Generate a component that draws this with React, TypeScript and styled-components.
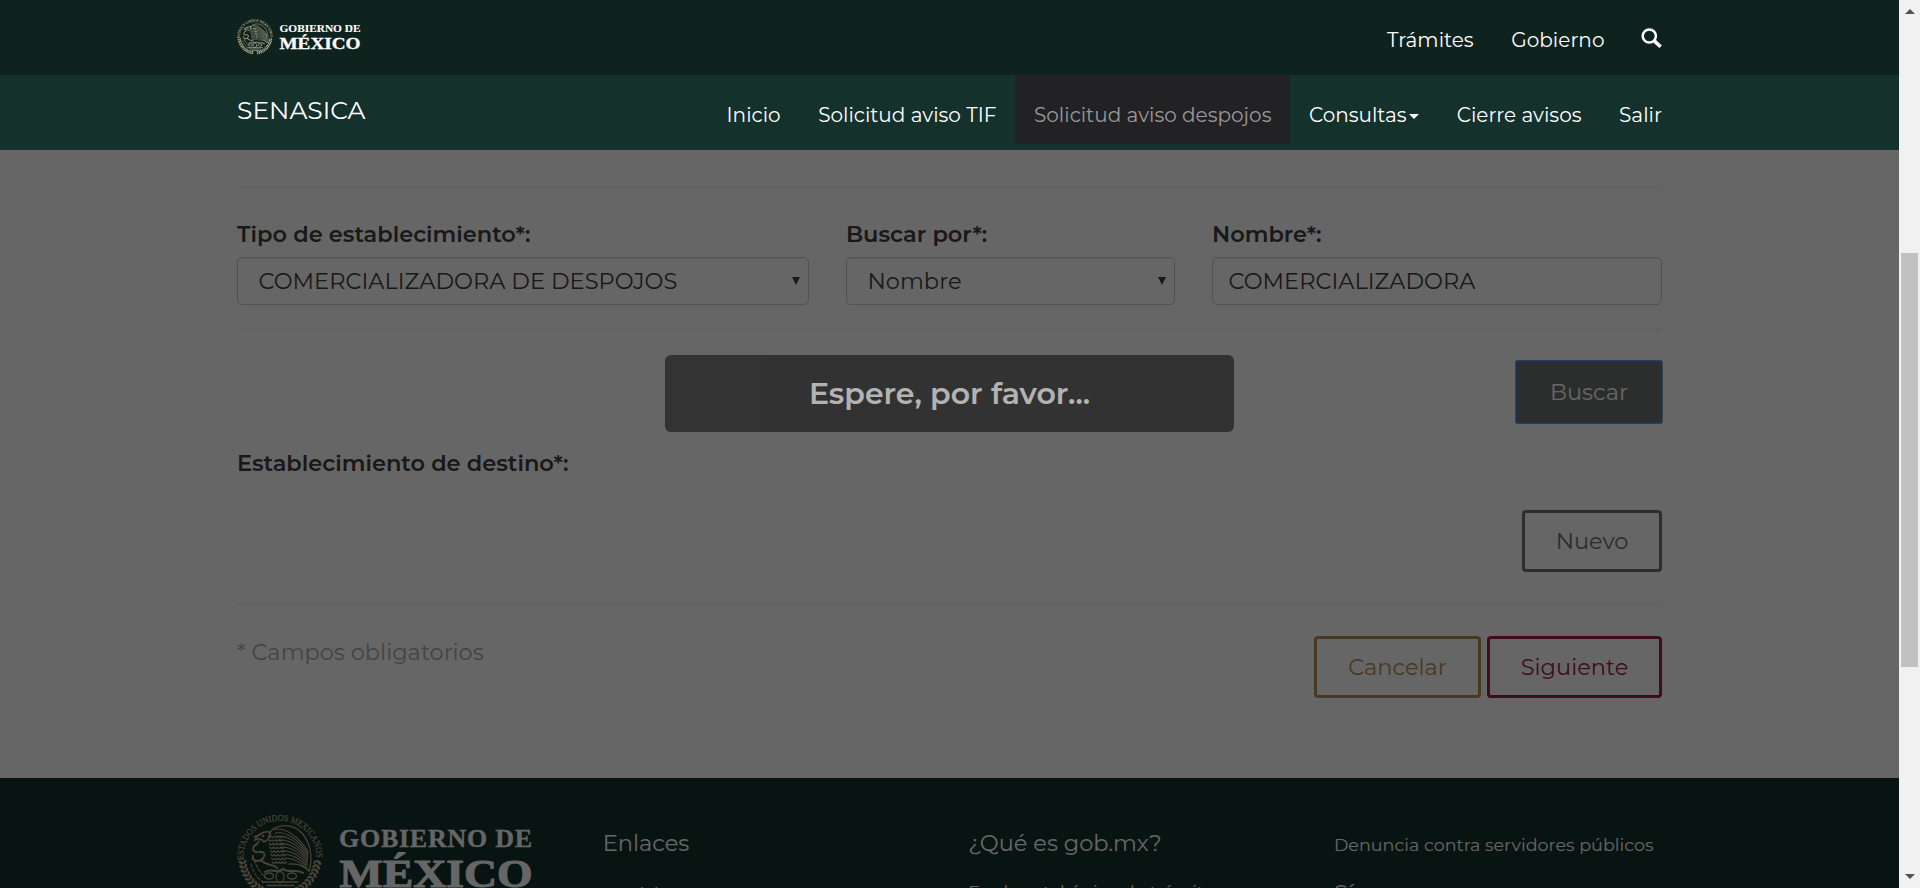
import React from 'react';
import styled, { createGlobalStyle, css } from 'styled-components';

const GlobalStyle = createGlobalStyle`
  *, *::before, *::after { box-sizing: border-box; }
  html, body { margin: 0; padding: 0; overflow: hidden; }
  body {
    font-family: Montserrat, Inter, "Liberation Sans", sans-serif;
    font-size: 22.5px;
    font-weight: 400;
    color: #404041;
    background: #fff;
  }
`;

const Screen = styled.div`
  display: grid;
  grid-template-columns: 1fr 21px;
  height: 888px;
  overflow: hidden;
`;

const Page = styled.div`
  position: relative;
  display: flex;
  flex-direction: column;
  height: 888px;
  overflow: hidden;
`;

const Container = styled.div`
  width: 1425px;
  margin: 0 auto;
`;

/* Header */

const Header = styled.header`
  position: relative;
  z-index: 2;
  flex: none;
`;

const Bar = styled.div<{ $tone: string }>`
  height: 75px;
  background: ${(p) => p.$tone};
`;

const BarInner = styled(Container)`
  display: flex;
  justify-content: space-between;
  align-items: flex-start;
  height: 75px;
`;

const HeaderBrand = styled.a`
  display: flex;
  padding-top: 19px;
`;

const TopLinks = styled.nav`
  display: flex;
  gap: 37.5px;
  padding-top: 28px;
`;

const TopLink = styled.a`
  font-size: 20px;
  line-height: 25px;
  font-weight: 400;
  letter-spacing: 0.05px;
  color: #fff;
`;

const SearchGlyph = styled.svg`
  display: block;
  width: 21px;
  height: 21px;
  margin: 0 0 0 -1px;
`;

const SiteName = styled.a`
  padding-top: 20px;
  font-size: 25px;
  line-height: 30px;
  font-weight: 400;
  color: #fff;
`;

const Menu = styled.nav`
  display: flex;
  margin-right: -18.75px;
`;

const MenuItem = styled.a<{ $active?: boolean }>`
  display: flex;
  align-items: center;
  height: 69px;
  padding: 11px 18.75px 0;
  font-size: 20px;
  line-height: 25px;
  font-weight: 400;
  letter-spacing: 0.026px;
  color: #fff;
  ${(p) =>
    p.$active &&
    css`
      color: #999;
      background: #222224;
    `}
`;

const Caret = styled.span`
  margin: 2px 0 0 2.5px;
  border-top: 5px solid currentColor;
  border-left: 5px solid transparent;
  border-right: 5px solid transparent;
`;

/* Form */

const Main = styled.main`
  flex: none;
  height: 628px;
  padding-top: 36px;
`;

const Rule = styled.hr`
  height: 1px;
  margin: 0;
  border: 0;
  background: #eee;
`;

const Fields = styled.div`
  display: grid;
  grid-template-columns: 572px 329px 450px;
  justify-content: space-between;
  padding: 31px 0 24px;
`;

const Field = styled.div`
  display: flex;
  flex-direction: column;
  gap: 7px;
`;

const Label = styled.label`
  line-height: 32px;
  font-weight: 600;
`;

const Control = styled.div<{ $select?: boolean }>`
  display: flex;
  align-items: center;
  justify-content: space-between;
  height: 48px;
  padding: 0 ${(p) => (p.$select ? '8px' : '15.5px')} 0 ${(p) => (p.$select ? '20.5px' : '15.5px')};
  border: 1px solid #ccc;
  border-radius: 5px;
  box-shadow: inset 0 1px 1px rgba(0, 0, 0, 0.075);
  letter-spacing: 0.03px;
  color: #404041;
`;

const SelectArrow = styled.span`
  border-top: 8px solid #404041;
  border-left: 4px solid transparent;
  border-right: 4px solid transparent;
`;

const Actions = styled.div`
  display: flex;
  justify-content: flex-end;
  gap: 6px;
`;

const SearchActions = styled(Actions)`
  padding: 31px 0 24px;
`;

const NewActions = styled(Actions)`
  padding: 31px 0;
`;

const FormFooter = styled.div`
  display: flex;
  justify-content: space-between;
  align-items: flex-start;
  padding-top: 32px;
`;

const Required = styled.p`
  margin: 0;
  line-height: 32px;
  color: #aaa;
`;

const Button = styled.button<{ $color: string; $filled?: boolean; $width: number }>`
  width: ${(p) => p.$width}px;
  height: 62px;
  padding: 0;
  border: 3px solid ${(p) => p.$color};
  border-radius: 4px;
  background: ${(p) => (p.$filled ? p.$color : 'transparent')};
  color: ${(p) => (p.$filled ? '#fff' : p.$color)};
  font: inherit;
  ${(p) =>
    p.$filled &&
    css`
      border: 1px solid #4d80cc;
      border-radius: 2px;
      box-shadow: 0 0 0 1px #6f9be0;
    `}
`;

/* Footer */

const Footer = styled.footer`
  flex: none;
  height: 400px;
  padding-top: 36px;
  background: #13322b;
`;

const FooterGrid = styled(Container)`
  display: grid;
  grid-template-columns: repeat(4, 1fr);
  column-gap: 37.5px;
`;

const FooterColumn = styled.div`
  padding-top: 15px;
  color: #fff;
`;

const FooterTitle = styled.h5<{ $gap?: number }>`
  margin: 0 0 ${(p) => p.$gap ?? 22}px;
  font-size: 22.5px;
  line-height: 28px;
  font-weight: 400;
`;

const FooterText = styled.p`
  margin: 0;
  font-size: 17.5px;
  line-height: 25px;
  font-weight: 400;
`;

const FooterLead = styled(FooterText)`
  padding-top: 3px;
  margin-bottom: 22px;
  letter-spacing: 0.03px;
  white-space: nowrap;
`;

/* Waiting overlay */

const Overlay = styled.div`
  position: absolute;
  inset: 0;
  z-index: 1;
  background: rgba(0, 0, 0, 0.6);
`;

const WaitMessage = styled.div`
  position: absolute;
  z-index: 3;
  top: 355px;
  left: 665px;
  display: flex;
  align-items: center;
  justify-content: center;
  width: 569px;
  height: 77px;
  border-radius: 6px;
  background: #000;
  opacity: 0.5;
  color: #fff;
  font-size: 30px;
  font-weight: 600;
`;

/* Scroll bar */

const ScrollTrack = styled.div`
  display: flex;
  flex-direction: column;
  align-items: center;
  height: 888px;
  padding: 9px 0;
  background: #f1f1f1;
`;

const ScrollArrow = styled.span<{ $up?: boolean }>`
  border-left: 5px solid transparent;
  border-right: 5px solid transparent;
  ${(p) => (p.$up ? 'border-bottom' : 'border-top')}: 5px solid #505050;
`;

const ScrollThumb = styled.div`
  width: 17px;
  height: 414px;
  margin: 239px 0 auto;
  background: #c1c1c1;
`;

const polar = (angle: number, radius: number) => {
  const a = (angle * Math.PI) / 180;
  return [43 + Math.cos(a) * radius, 43 + Math.sin(a) * radius];
};

const wreath = Array.from({ length: 12 }, (_, i) => 8 + i * 6.6).flatMap((a) => [a, 180 - a]);

function Seal({ id, size, color }: { id: string; size: number; color: string }) {
  return (
    <g transform={`scale(${size / 86})`} fill="none" stroke={color} strokeLinecap="round">
      <path id={id} d="M6.5 46 A36.6 36.6 0 1 1 79.5 46" stroke="none" />
      <text fill={color} strokeWidth="0.2" fontFamily='"Liberation Serif", serif' fontSize="9">
        <textPath href={`#${id}`} textLength="118" lengthAdjust="spacingAndGlyphs">
          ESTADOS UNIDOS MEXICANOS
        </textPath>
      </text>
      {wreath.map((a) => {
        const [x, y] = polar(a, 39.5);
        const [u, v] = polar(a, 35.5);
        return (
          <g key={a} fill={color} stroke="none">
            <ellipse cx={x} cy={y} rx="2.9" ry="1.4" transform={`rotate(${a + 40} ${x} ${y})`} />
            <ellipse cx={u} cy={v} rx="2.5" ry="1.2" transform={`rotate(${a - 50} ${u} ${v})`} />
          </g>
        );
      })}
      {/* wing: nested feathers sweeping from the shoulder to the tips at the lower right */}
      <path d="M32 20 C38 9 56 9 65 19 C74 30 76 44 72 57 C66 51 60 49 52 50" strokeWidth="1.3" />
      {[0, 1, 2, 3, 4, 5, 6, 7, 8].map((i) => (
        <path
          key={i}
          d={`M${37 + i * 1.4} ${15.5 + i * 3.6} C${48 + i} ${13 + i * 3.8} ${61 + i * 0.5} ${22 + i * 3.4} ${71.5 - i * 0.2} ${38 + i * 2.1}`}
          strokeWidth="1.1"
        />
      ))}
      {/* head and neck */}
      <path d="M33 18 C26 17 20 21 18 26 C22 24 25 25 27 28 C31 26 34 24 33 18Z" strokeWidth="1.5" />
      <path d="M17 23 L24 20 M22 27 L20 30" strokeWidth="1.5" />
      <circle cx="26" cy="22" r="0.9" fill={color} />
      {/* breast feathers */}
      {[0, 1, 2, 3, 4, 5, 6, 7].map((i) => (
        <path
          key={i}
          d={`M${31 + i * 0.6} ${22 + i * 3.7} q1.8 2.8 3.6 0 q1.8 2.8 3.6 0 q1.8 2.8 3.6 0 q1.8 2.8 3.6 0`}
          strokeWidth="1.2"
        />
      ))}
      {/* serpent */}
      <path
        d="M20 30 C14 33 15 39 22 38 C29 37 29 43 24 46 C18 49 14 44 16 42 M24 46 C30 52 36 50 40 54"
        strokeWidth="2.1"
        strokeDasharray="1.6 1.9"
      />
      <path d="M14 50 C16 58 20 64 27 69 M17 46 C20 54 24 60 29 64" strokeWidth="1.1" strokeDasharray="3 2" />
      {/* nopal and pedestal */}
      <path d="M28 58 C34 54 40 60 46 55 C52 60 60 54 66 59" strokeWidth="2" />
      <ellipse cx="32" cy="62" rx="4.5" ry="3" strokeWidth="1.3" />
      <ellipse cx="43" cy="63" rx="4" ry="5.5" strokeWidth="1.3" />
      <ellipse cx="55" cy="62" rx="4.5" ry="3" strokeWidth="1.3" />
      <path d="M26 68 H61 M30 71.5 H57 M36 75 H51" strokeWidth="1.5" />
    </g>
  );
}

const Wordmark = styled.text`
  font-family: "Liberation Serif", serif;
  font-weight: 700;
  fill: #fff;
  stroke: #fff;
`;

function HeaderLogo() {
  return (
    <svg width="126" height="37" viewBox="0 0 126 37">
      <Seal id="seal-header" size={36} color="#bdb493" />
      <Wordmark x="42.5" y="13.2" fontSize="10.8" strokeWidth="0.1" textLength="81" lengthAdjust="spacingAndGlyphs">
        GOBIERNO DE
      </Wordmark>
      <Wordmark x="42.5" y="30" fontSize="17.2" strokeWidth="0.3" textLength="81" lengthAdjust="spacingAndGlyphs">
        MÉXICO
      </Wordmark>
    </svg>
  );
}

function FooterLogo() {
  return (
    <svg width="300" height="90" viewBox="0 0 300 90">
      <Seal id="seal-footer" size={86} color="#b9a988" />
      <Wordmark x="102" y="32.5" fontSize="26" strokeWidth="0.3" textLength="193">
        GOBIERNO DE
      </Wordmark>
      <Wordmark x="102.5" y="73" fontSize="40.5" strokeWidth="1" textLength="193" lengthAdjust="spacingAndGlyphs">
        MÉXICO
      </Wordmark>
    </svg>
  );
}

export default function App() {
  return (
    <Screen>
      <GlobalStyle />
      <Page>
        <Header>
          <Bar $tone="#0e231e">
            <BarInner>
              <HeaderBrand>
                <HeaderLogo />
              </HeaderBrand>
              <TopLinks>
                <TopLink>Trámites</TopLink>
                <TopLink>Gobierno</TopLink>
                <SearchGlyph viewBox="0 0 21 21" fill="none" stroke="#fff">
                  <circle cx="8.3" cy="8" r="6.6" strokeWidth="2.5" />
                  <path d="M13 12.6 L19.6 18.8" strokeWidth="3.6" />
                </SearchGlyph>
              </TopLinks>
            </BarInner>
          </Bar>
          <Bar $tone="#14312c">
            <BarInner>
              <SiteName>SENASICA</SiteName>
              <Menu>
                <MenuItem>Inicio</MenuItem>
                <MenuItem>Solicitud aviso TIF</MenuItem>
                <MenuItem $active>Solicitud aviso despojos</MenuItem>
                <MenuItem>
                  Consultas
                  <Caret />
                </MenuItem>
                <MenuItem>Cierre avisos</MenuItem>
                <MenuItem>Salir</MenuItem>
              </Menu>
            </BarInner>
          </Bar>
        </Header>

        <Main>
          <Container>
            <Rule />
            <Fields>
              <Field>
                <Label>Tipo de establecimiento*:</Label>
                <Control $select>
                  COMERCIALIZADORA DE DESPOJOS
                  <SelectArrow />
                </Control>
              </Field>
              <Field>
                <Label>Buscar por*:</Label>
                <Control $select>
                  Nombre
                  <SelectArrow />
                </Control>
              </Field>
              <Field>
                <Label>Nombre*:</Label>
                <Control>COMERCIALIZADORA</Control>
              </Field>
            </Fields>
            <Rule />
            <SearchActions>
              <Button $color="#6f7272" $filled $width={146}>Buscar</Button>
            </SearchActions>
            <Label as="div">Establecimiento de destino*:</Label>
            <NewActions>
              <Button $color="#6f7272" $width={140}>Nuevo</Button>
            </NewActions>
            <Rule />
            <FormFooter>
              <Required>* Campos obligatorios</Required>
              <Actions>
                <Button $color="#b38e5d" $width={167}>Cancelar</Button>
                <Button $color="#9d2449" $width={175}>Siguiente</Button>
              </Actions>
            </FormFooter>
          </Container>
        </Main>

        <Footer>
          <FooterGrid>
            <FooterLogo />
            <FooterColumn>
              <FooterTitle $gap={24}>Enlaces</FooterTitle>
              <FooterText>Participa</FooterText>
            </FooterColumn>
            <FooterColumn>
              <FooterTitle>¿Qué es gob.mx?</FooterTitle>
              <FooterText>Es el portal único de trámites,</FooterText>
            </FooterColumn>
            <FooterColumn>
              <FooterLead>Denuncia contra servidores públicos</FooterLead>
              <FooterTitle>Síguenos en</FooterTitle>
            </FooterColumn>
          </FooterGrid>
        </Footer>

        <Overlay />
        <WaitMessage>Espere, por favor...</WaitMessage>
      </Page>
      <ScrollTrack>
        <ScrollArrow $up />
        <ScrollThumb />
        <ScrollArrow />
      </ScrollTrack>
    </Screen>
  );
}
